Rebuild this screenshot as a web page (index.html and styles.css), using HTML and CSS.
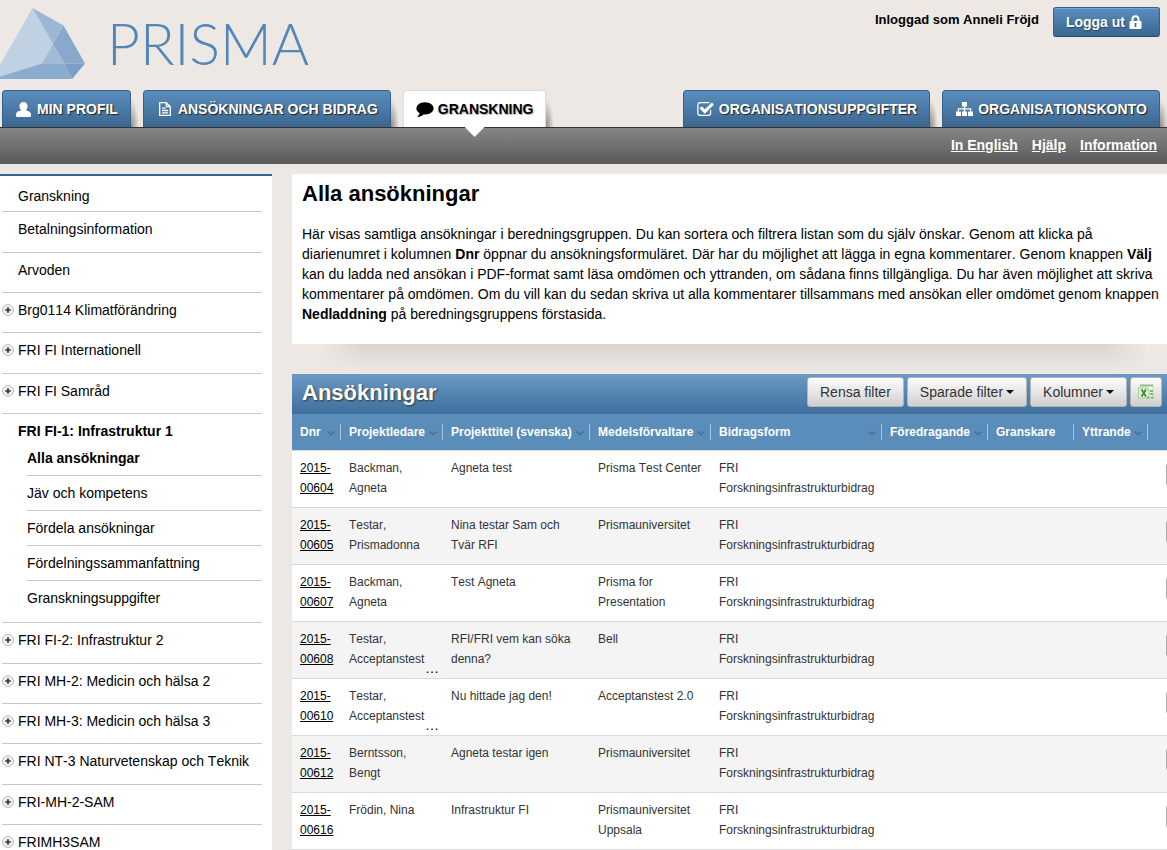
FILE: index.html
```html
<!DOCTYPE html>
<html lang="sv">
<head>
<meta charset="utf-8">
<title>Prisma – Alla ansökningar</title>
<link rel="stylesheet" href="styles.css">
</head>
<body>
<svg class="defs" aria-hidden="true">
  <symbol id="chevron" viewBox="0 0 8 5"><path d="M0.5 0.5 4 3.5 7.5 0.5" fill="none" stroke="#4b7093" stroke-width="1.6"/></symbol>
  <symbol id="plus" viewBox="0 0 12 12"><circle cx="6" cy="6" r="5.5" fill="#f0f0f0" stroke="#bdbdbd"/><path d="M6 3.2v5.6M3.2 6h5.6" stroke="#333" stroke-width="1.7"/></symbol>
  <symbol id="caret" viewBox="0 0 8 4"><path d="M0 0h8L4 4z" fill="#111"/></symbol>
</svg>

<header class="header">
  <a class="logo" href="#" aria-label="Prisma">
    <svg class="logo-mark" viewBox="0 0 86 80" aria-hidden="true">
      <path fill="#c0d1e4" d="M32.500 8 53 44 42 63.500 0 76.500V65z"/>
      <path fill="#9bb7d4" d="M32.500 8 63.500 25.500 53 44z"/>
      <path fill="#88a8cc" d="M63.500 25.500 85 63.500H64.500L53 44z"/>
      <path fill="#a1bad6" d="M53 44 64.500 63.500H42z"/>
      <path fill="#8aaccf" d="M42 63.500H64.500L72 79H0V76.500z"/>
      <path fill="#7a9ec6" d="M64.500 63.500H85L72 79z"/>
    </svg>
    <span class="wordmark">PRISMA</span>
  </a>
  <div class="account">
    <span class="account-name">Inloggad som Anneli Fröjd</span>
    <button class="logout" type="button">Logga ut
      <svg class="icon-lock" viewBox="0 0 12 14" aria-hidden="true"><path d="M3 7V4.200a3 3 0 0 1 6 0V7" fill="none" stroke="#fff" stroke-width="2"/><rect x="0" y="6" width="12" height="8" rx="1" fill="#fff"/><path d="M5 8h2v1.500l-.4.5.4 2H5l.4-2-.4-.5z" fill="#3f6d99"/></svg>
    </button>
  </div>
</header>

<nav class="tabs" aria-label="Huvudmeny">
  <div class="tab-group">
    <a class="tab" href="#"><svg class="icon-user" viewBox="0 0 15 15" aria-hidden="true"><path fill="#fff" d="M7.500 0C10 0 11.500 1.700 11.500 4c0 2-.8 3.700-1.700 4.500C13 9 15 10.200 15 12.500V14q0 1-1 1H1q-1 0-1-1v-1.500C0 10.200 2 9 5.200 8.500 4.300 7.700 3.500 6 3.500 4 3.500 1.700 5 0 7.500 0z"/></svg>MIN PROFIL</a>
    <a class="tab" href="#"><svg class="icon-file" viewBox="0 0 12 14" aria-hidden="true"><path fill="none" stroke="#fff" stroke-width="1.300" d="M.7.700h6.600l4 4v8.600H.7zM7.300.7v4h4M3 6.200h3.500M3 8.500h6M3 10.800h6"/></svg>ANSÖKNINGAR OCH BIDRAG</a>
    <a class="tab tab-active" href="#" aria-current="page"><svg class="icon-comment" viewBox="0 128 1792 1664" aria-hidden="true"><path d="M1792 896q0 174-120 321.500t-326 233-450 85.500q-70 0-145-8-198 175-460 242-49 14-114 22h-5q-15 0-27-10.500t-16-27.500v-1q-3-4-.5-12t2-10 4.500-9.500l6-9 7-8.500 8-9q7-8 31-34.500t34.500-38 31-39.500 32.500-51 27-59 26-76q-157-89-247.500-220t-90.500-281q0-130 71-248.500t191-204.500 286-136.500 348-50.500 348 50.500 286 136.500 191 204.500 71 248.500z"/></svg>GRANSKNING</a>
  </div>
  <div class="tab-group">
    <a class="tab" href="#"><svg class="icon-check" viewBox="64 128 1664 1408" aria-hidden="true"><path fill="#fff" d="M1472 930v318q0 119-84.500 203.500t-203.500 84.500h-832q-119 0-203.500-84.500t-84.500-203.500v-832q0-119 84.500-203.500t203.500-84.500h832q63 0 117 25 15 7 18 23 3 17-9 29l-49 49q-14 14-32 8-23-6-45-6h-832q-66 0-113 47t-47 113v832q0 66 47 113t113 47h832q66 0 113-47t47-113v-254q0-13 9-22l64-64q15-15 35-7t20 29zm231-489l-814 814q-24 24-57 24t-57-24l-430-430q-24-24-24-57t24-57l110-110q24-24 57-24t57 24l263 263 647-647q24-24 57-24t57 24l110 110q24 24 24 57t-24 57z"/></svg>ORGANISATIONSUPPGIFTER</a>
    <a class="tab" href="#"><svg class="icon-sitemap" viewBox="0 0 17 14" aria-hidden="true"><path fill="#fff" d="M6 0h5v4.500H9.200v1.800h6V9.500H17V14h-5V9.500h2V7.500H9.200v2H11V14H6V9.500h1.800v-2H3v2h2V14H0V9.500h1.800V6.300h6V4.500H6z"/></svg>ORGANISATIONSKONTO</a>
  </div>
</nav>

<div class="subbar">
  <a href="#">In English</a>
  <a href="#">Hjälp</a>
  <a href="#">Information</a>
</div>

<div class="layout">
  <nav class="sidebar" aria-label="Granskning">
    <ul class="menu">
      <li><a href="#">Granskning</a></li>
      <li><a href="#">Betalningsinformation</a></li>
      <li><a href="#">Arvoden</a></li>
      <li><button class="expand" type="button" aria-label="Visa Brg0114"><svg viewBox="0 0 12 12"><use href="#plus"/></svg></button><a href="#">Brg0114 Klimatförändring</a></li>
      <li><button class="expand" type="button" aria-label="Visa FI Internationell"><svg viewBox="0 0 12 12"><use href="#plus"/></svg></button><a href="#">FRI FI Internationell</a></li>
      <li><button class="expand" type="button" aria-label="Visa FI Samråd"><svg viewBox="0 0 12 12"><use href="#plus"/></svg></button><a href="#">FRI FI Samråd</a></li>
      <li class="open"><a href="#">FRI FI-1: Infrastruktur 1</a>
        <ul class="submenu">
          <li class="current"><a href="#">Alla ansökningar</a></li>
          <li><a href="#">Jäv och kompetens</a></li>
          <li><a href="#">Fördela ansökningar</a></li>
          <li><a href="#">Fördelningssammanfattning</a></li>
          <li><a href="#">Granskningsuppgifter</a></li>
        </ul>
      </li>
      <li><button class="expand" type="button" aria-label="Visa FI-2"><svg viewBox="0 0 12 12"><use href="#plus"/></svg></button><a href="#">FRI FI-2: Infrastruktur 2</a></li>
      <li><button class="expand" type="button" aria-label="Visa MH-2"><svg viewBox="0 0 12 12"><use href="#plus"/></svg></button><a href="#">FRI MH-2: Medicin och hälsa 2</a></li>
      <li><button class="expand" type="button" aria-label="Visa MH-3"><svg viewBox="0 0 12 12"><use href="#plus"/></svg></button><a href="#">FRI MH-3: Medicin och hälsa 3</a></li>
      <li><button class="expand" type="button" aria-label="Visa NT-3"><svg viewBox="0 0 12 12"><use href="#plus"/></svg></button><a href="#">FRI NT-3 Naturvetenskap och Teknik</a></li>
      <li><button class="expand" type="button" aria-label="Visa MH-2-SAM"><svg viewBox="0 0 12 12"><use href="#plus"/></svg></button><a href="#">FRI-MH-2-SAM</a></li>
      <li><button class="expand" type="button" aria-label="Visa MH3SAM"><svg viewBox="0 0 12 12"><use href="#plus"/></svg></button><a href="#">FRIMH3SAM</a></li>
    </ul>
  </nav>

  <main class="main">
    <section class="intro">
      <h1>Alla ansökningar</h1>
      <p>Här visas samtliga ansökningar i beredningsgruppen. Du kan sortera och filtrera listan som du själv önskar. Genom att klicka på diarienumret i kolumnen <b>Dnr</b> öppnar du ansökningsformuläret. Där har du möjlighet att lägga in egna kommentarer. Genom knappen <b>Välj</b> kan du ladda ned ansökan i PDF-format samt läsa omdömen och yttranden, om sådana finns tillgängliga. Du har även möjlighet att skriva kommentarer på omdömen. Om du vill kan du sedan skriva ut alla kommentarer tillsammans med ansökan eller omdömet genom knappen <b>Nedladdning</b> på beredningsgruppens förstasida.</p>
    </section>
    <div class="shade"></div>

    <section class="grid">
      <div class="grid-title">
        <h2>Ansökningar</h2>
        <div class="tools">
          <button class="tool" type="button">Rensa filter</button>
          <button class="tool" type="button">Sparade filter<svg class="caret" viewBox="0 0 8 4"><use href="#caret"/></svg></button>
          <button class="tool" type="button">Kolumner<svg class="caret" viewBox="0 0 8 4"><use href="#caret"/></svg></button>
          <button class="tool tool-excel" type="button" aria-label="Exportera till Excel">
            <svg class="icon-excel" viewBox="0 0 16 16" aria-hidden="true"><path d="M2.500 1.500h12.500v13H4" fill="#f3f8f0" stroke="#c3dcb8"/><path d="M2 .5h13v2H2z" fill="#8fbf7c"/><path d="M.5 3.500 11 4.500v9L.5 14.500z" fill="#dfeed7" stroke="#a9cd99"/><path d="m3.500 5.500 4.500 7M8 5.500l-4.500 7" stroke="#3f7f35" stroke-width="1.600"/><path d="M12 6h3v2h-3zM12 9h3v2h-3zM9 12.500h2.500v2H9zM12.500 12.500h3v2h-3z" fill="#83b56e"/></svg>
          </button>
        </div>
      </div>
      <table class="table">
        <colgroup><col class="c-dnr"><col class="c-leader"><col class="c-title"><col class="c-org"><col class="c-form"><col class="c-rapp"><col class="c-rev"><col class="c-stmt"><col class="c-act"></colgroup>
        <thead>
          <tr>
            <th scope="col"><div class="head">Dnr<svg class="chev"><use href="#chevron"/></svg></div></th>
            <th scope="col"><div class="head">Projektledare<svg class="chev"><use href="#chevron"/></svg></div></th>
            <th scope="col"><div class="head">Projekttitel (svenska)<svg class="chev"><use href="#chevron"/></svg></div></th>
            <th scope="col"><div class="head">Medelsförvaltare<svg class="chev"><use href="#chevron"/></svg></div></th>
            <th scope="col"><div class="head">Bidragsform<svg class="chev"><use href="#chevron"/></svg></div></th>
            <th scope="col"><div class="head">Föredragande<svg class="chev"><use href="#chevron"/></svg></div></th>
            <th scope="col"><div class="head">Granskare</div></th>
            <th scope="col"><div class="head">Yttrande<svg class="chev"><use href="#chevron"/></svg></div></th>
            <td></td>
          </tr>
        </thead>
        <tbody>
          <tr><td><a href="#">2015-00604</a></td><td>Backman, Agneta</td><td>Agneta test</td><td>Prisma Test Center</td><td>FRI<br>Forskningsinfrastrukturbidrag</td><td></td><td></td><td></td><td class="act"><button class="pick" type="button" aria-label="Öppna"></button></td></tr>
          <tr><td><a href="#">2015-00605</a></td><td>Testar, Prismadonna</td><td>Nina testar Sam och Tvär RFI</td><td>Prismauniversitet</td><td>FRI<br>Forskningsinfrastrukturbidrag</td><td></td><td></td><td></td><td class="act"><button class="pick" type="button" aria-label="Öppna"></button></td></tr>
          <tr><td><a href="#">2015-00607</a></td><td>Backman, Agneta</td><td>Test Agneta</td><td>Prisma for Presentation</td><td>FRI<br>Forskningsinfrastrukturbidrag</td><td></td><td></td><td></td><td class="act"><button class="pick" type="button" aria-label="Öppna"></button></td></tr>
          <tr><td><a href="#">2015-00608</a></td><td>Testar, Acceptanstest<span class="more">…</span></td><td>RFI/FRI vem kan söka denna?</td><td>Bell</td><td>FRI<br>Forskningsinfrastrukturbidrag</td><td></td><td></td><td></td><td class="act"><button class="pick" type="button" aria-label="Öppna"></button></td></tr>
          <tr><td><a href="#">2015-00610</a></td><td>Testar, Acceptanstest<span class="more">…</span></td><td>Nu hittade jag den!</td><td>Acceptanstest 2.0</td><td>FRI<br>Forskningsinfrastrukturbidrag</td><td></td><td></td><td></td><td class="act"><button class="pick" type="button" aria-label="Öppna"></button></td></tr>
          <tr><td><a href="#">2015-00612</a></td><td>Berntsson, Bengt</td><td>Agneta testar igen</td><td>Prismauniversitet</td><td>FRI<br>Forskningsinfrastrukturbidrag</td><td></td><td></td><td></td><td class="act"><button class="pick" type="button" aria-label="Öppna"></button></td></tr>
          <tr><td><a href="#">2015-00616</a></td><td>Frödin, Nina</td><td>Infrastruktur FI</td><td>Prismauniversitet Uppsala</td><td>FRI<br>Forskningsinfrastrukturbidrag</td><td></td><td></td><td></td><td class="act"><button class="pick" type="button" aria-label="Öppna"></button></td></tr>
        </tbody>
      </table>
    </section>
  </main>
</div>
</body>
</html>
```

FILE: styles.css
```css
* { box-sizing: border-box; }

html { scrollbar-width: none; }

body {
  margin: 0;
  background: #ede8e4;
  color: #000;
  font: 14px/20px "Liberation Sans", Arial, sans-serif;
  font-kerning: none;
  overflow-x: hidden;
}

a { color: inherit; text-decoration: none; }
button { font: inherit; color: inherit; cursor: pointer; }
svg { display: block; flex: none; }
h1, h2, p, ul { margin: 0; padding: 0; }
ul { list-style: none; }
.defs { position: absolute; width: 0; height: 0; }

/* Header */
.header {
  display: flex;
  justify-content: space-between;
  align-items: flex-start;
  height: 90px;
  padding-right: 7px;
}
.logo { display: flex; gap: 21px; }
.logo-mark { width: 86px; height: 80px; }
.wordmark {
  color: #4f87b9;
  font: 300 57px/86px Lato, "Open Sans", sans-serif;
}
.account { display: flex; gap: 14px; padding-top: 7px; }
.account-name { font-size: 13px; font-weight: bold; line-height: 26px; }
.logout {
  display: flex;
  align-items: center;
  gap: 4px;
  height: 30px;
  padding: 0 17px 0 12px;
  border: 1px solid #33618d;
  border-bottom-color: #24486b;
  border-radius: 3px;
  background: linear-gradient(#5a8ebe, #3b668f);
  box-shadow: inset 0 1px 0 #7ba5cb;
  color: #fff;
  font-weight: bold;
  text-shadow: 1px 1px 1px #24486b;
}
.icon-lock { width: 13px; height: 14px; }

/* Main tabs */
.tabs { display: flex; justify-content: space-between; padding: 0 7px 0 2px; }
.tab-group { display: flex; gap: 12px; }
.tab {
  position: relative;
  display: flex;
  align-items: center;
  gap: 6px;
  height: 37px;
  padding: 0 12px 0 13px;
  border: 1px solid #33618d;
  border-bottom: 0;
  border-radius: 4px 4px 0 0;
  background: linear-gradient(#5a8ebe, #3b668f);
  color: #fff;
  font-weight: bold;
  white-space: nowrap;
  text-shadow: 1px 1px 1px #222;
}
.tab::before {
  content: "";
  position: absolute;
  top: 8px;
  left: 100%;
  width: 8px;
  height: 28px;
  margin-left: 1px;
  background: radial-gradient(ellipse 100% 100% at 0 100%, #8f8a86, #ede8e4);
}
.tab-active {
  border-color: #dcdcdc;
  background: #fff;
  color: #000;
  text-shadow: 1px 1px 1px #aaa;
}
.tab-active::after {
  content: "";
  position: absolute;
  top: 100%;
  left: 50%;
  width: 20px;
  height: 10px;
  margin-left: -10px;
  background: #fff;
  clip-path: polygon(0 0, 100% 0, 50% 100%);
  z-index: 1;
}
.icon-user { width: 15px; height: 15px; }
.icon-file { width: 12px; height: 14px; margin: 0 1px 0 2px; }
.icon-comment { width: 18px; height: 16px; margin: 0 -2px 0 -1px; }
.icon-check { width: 17px; height: 14px; margin-right: -1px; }
.icon-sitemap { width: 17px; height: 14px; margin-right: -1px; }

.subbar {
  display: flex;
  justify-content: flex-end;
  align-items: center;
  gap: 14px;
  height: 37px;
  padding: 0 10px 2px 0;
  border-top: 1px solid #333;
  background: linear-gradient(#868686, #595959);
  color: #fff;
  font-weight: bold;
}
.subbar a { text-decoration: underline; }

/* Columns */
.layout { display: flex; gap: 20px; padding-top: 10px; }
.sidebar {
  flex: none;
  width: 272px;
  padding: 0 10px 0 2px;
  border-top: 2px solid #3a6591;
  background: #fff;
}
.menu > li {
  position: relative;
  padding: 7px 0 12px 16px;
  border-bottom: 1px solid #c8c8c8;
}
.menu > li:nth-child(3n + 2) { padding-bottom: 13px; }
.menu > li:first-child { padding-top: 10px; padding-bottom: 5px; }
.menu > li.open { padding-bottom: 7px; }
.menu a { display: block; }
.open > a, .current > a { font-weight: bold; }
.expand {
  position: absolute;
  top: 11px;
  left: 0;
  width: 12px;
  height: 12px;
  padding: 0;
  border: 0;
  background: none;
}
.submenu { padding-left: 9px; }
.submenu li { padding: 7px 0; border-bottom: 1px solid #c8c8c8; }
.submenu li:last-child { border-bottom: 0; }

.main { flex: 1; min-width: 0; }
.intro { padding: 8px 5px 20px 10px; background: #fff; }
.intro h1 { margin-bottom: 18px; font-size: 22px; line-height: 24px; }
.shade {
  height: 30px;
  margin: 0 20px 0 30px;
  background: linear-gradient(#dad5d0, #ede8e4);
  -webkit-mask-image: linear-gradient(90deg, transparent, #000 40px, #000 calc(100% - 40px), transparent);
  mask-image: linear-gradient(90deg, transparent, #000 40px, #000 calc(100% - 40px), transparent);
}

/* Application grid */
.grid { background: #fff; }
.grid-title {
  display: flex;
  justify-content: space-between;
  height: 40px;
  padding: 3px 5px 0 10px;
  background: linear-gradient(#6a99c4, #3e6f9d);
}
.grid-title h2 {
  color: #fff;
  font-size: 22px;
  line-height: 32px;
  text-shadow: 1px 1px 2px #333;
}
.tools { display: flex; gap: 3px; }
.tool {
  display: flex;
  align-items: center;
  gap: 3px;
  height: 30px;
  padding: 0 12px;
  border: 1px solid #b4b4b4;
  border-radius: 3px;
  background: linear-gradient(#fdfdfd, #cfcfcf);
  color: #333;
}
.tool-excel { padding: 0 7px; }
.caret { width: 8px; height: 4px; }
.icon-excel { width: 16px; height: 16px; }

.table {
  width: 100%;
  table-layout: fixed;
  border-collapse: separate;
  border-spacing: 0;
  color: #333;
  font-size: 12px;
}
.c-dnr { width: 49px; }
.c-leader { width: 102px; }
.c-title { width: 147px; }
.c-org { width: 121px; }
.c-rapp { width: 106px; }
.c-rev { width: 86px; }
.c-stmt { width: 74px; }
.c-act { width: 19px; }

.table thead { background: #5b8dbb; }
.table th, .table thead td { height: 37px; padding: 0; border-bottom: 1px solid #ddd; }
.table th { color: #fff; text-align: left; vertical-align: middle; }
.head {
  display: flex;
  justify-content: space-between;
  align-items: center;
  height: 16px;
  padding: 0 5px 0 8px;
  border-right: 1px solid #a9c3dc;
  white-space: nowrap;
}
.chev { width: 8px; height: 5px; margin-top: 3px; }

.table tbody td {
  position: relative;
  height: 57px;
  padding: 7px 8px 9px;
  border-bottom: 1px solid #d9d9d9;
  vertical-align: top;
}
.table tbody td:first-child { padding-right: 0; }
.table tbody tr:nth-child(even) { background: #f4f4f4; }
.table tbody a { color: #000; text-decoration: underline; }
.more { position: absolute; right: 4px; bottom: 0; font-size: 14px; color: #000; }

.table tbody td.act { padding: 12px 0 0 18px; overflow: hidden; }
.pick {
  display: block;
  width: 60px;
  height: 23px;
  padding: 0;
  border: 1px solid #aaa;
  border-radius: 3px;
  background: #ddd;
}
```
